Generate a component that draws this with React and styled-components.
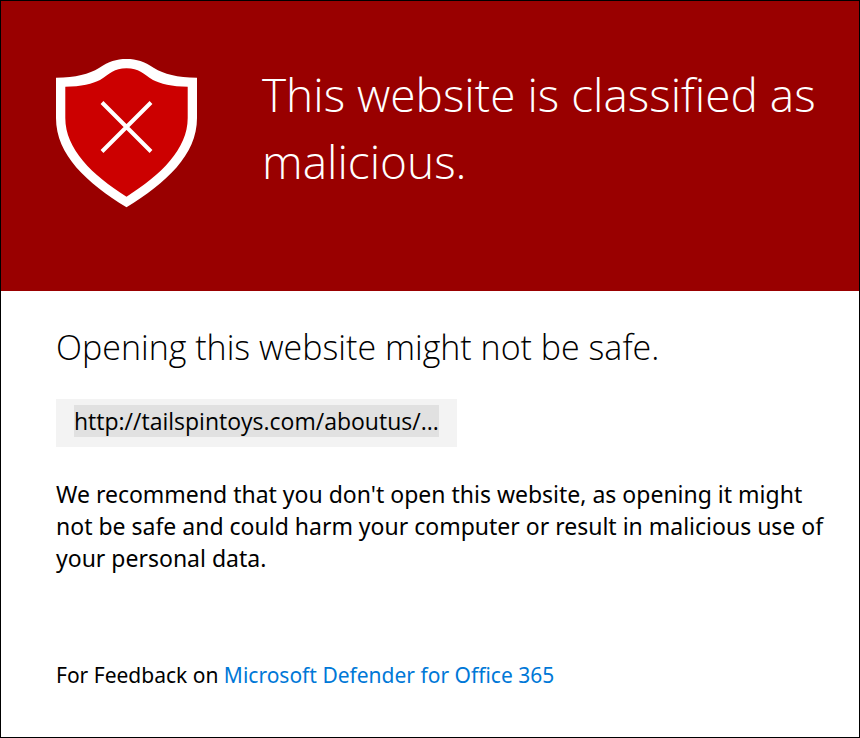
import React from "react";
import styled, { createGlobalStyle } from "styled-components";

const GlobalStyle = createGlobalStyle`
  *, *::before, *::after { box-sizing: border-box; }
  body {
    margin: 0;
    background: #fff;
    color: #000;
    font-family: "Noto Sans", "Open Sans", sans-serif;
  }
`;

const Page = styled.div`
  min-height: 100vh;
  border: 1px solid #000;
`;

const Banner = styled.header`
  display: flex;
  align-items: flex-start;
  gap: 64px;
  min-height: 290px;
  padding: 57px 40px 57px 55px;
  background: #990000;
  color: #fff;
`;

const Shield = styled.svg`
  flex: none;
  width: 142px;
  height: 150px;
`;

const Title = styled.h1`
  margin: 3px 0 0;
  font-family: "Open Sans", sans-serif;
  font-size: 46px;
  line-height: 67px;
  font-weight: 300;
`;

const Content = styled.main`
  padding: 32px 32px 44px 55px;
`;

const Subtitle = styled.h2`
  margin: 0 0 28px;
  font-family: "Open Sans", sans-serif;
  font-size: 34px;
  line-height: 48px;
  font-weight: 300;
`;

const UrlBox = styled.div`
  width: fit-content;
  max-width: 100%;
  padding: 6px 18px 10px;
  background: #f3f3f3;
`;

const Url = styled.span`
  display: block;
  font-family: "Open Sans", sans-serif;
  font-size: 23px;
  line-height: 32px;
  background: #e1e1e1;
`;

const Text = styled.p`
  margin: 31px 0 0;
  font-size: 23px;
  line-height: 32px;
`;

const Feedback = styled.footer`
  margin-top: 85px;
  font-size: 21px;
  line-height: 32px;
`;

const Link = styled.a`
  color: #0078d7;
  text-decoration: none;
`;

export default function App() {
  return (
    <>
      <GlobalStyle />
      <Page>
        <Banner>
          <Shield viewBox="0 0 142 150" aria-hidden="true">
            <path
              d="M0 19.7C20 19.7 33 16 43 10C53 3.5 60 1 70.5 1C81 1 88 3.5 98 10C108 16 121 19.7 141 19.7V60C141 97 110 125 70.5 149.3C31 125 0 97 0 60Z"
              fill="#fff"
            />
            <path
              d="M9.3 28.7C25 28.7 37 25.5 44 22C54 16 58 10.3 70.5 10.3C83 10.3 87 16 97 22C104 25.5 116 28.7 131.7 28.7V60C131.7 91 105 117 70.5 138.7C36 117 9.3 91 9.3 60Z"
              fill="#cc0000"
            />
            <path
              d="M46 44.5L95 93.5M95 44.5L46 93.5"
              stroke="#fff"
              strokeWidth="4"
            />
          </Shield>
          <Title>This website is classified as malicious.</Title>
        </Banner>
        <Content>
          <Subtitle>Opening this website might not be safe.</Subtitle>
          <UrlBox>
            <Url>http://tailspintoys.com/aboutus/...</Url>
          </UrlBox>
          <Text>
            We recommend that you don't open this website, as opening it might
            not be safe and could harm your computer or result in malicious use
            of your personal data.
          </Text>
          <Feedback>
            For Feedback on{" "}
            <Link href="#feedback">Microsoft Defender for Office 365</Link>
          </Feedback>
        </Content>
      </Page>
    </>
  );
}
